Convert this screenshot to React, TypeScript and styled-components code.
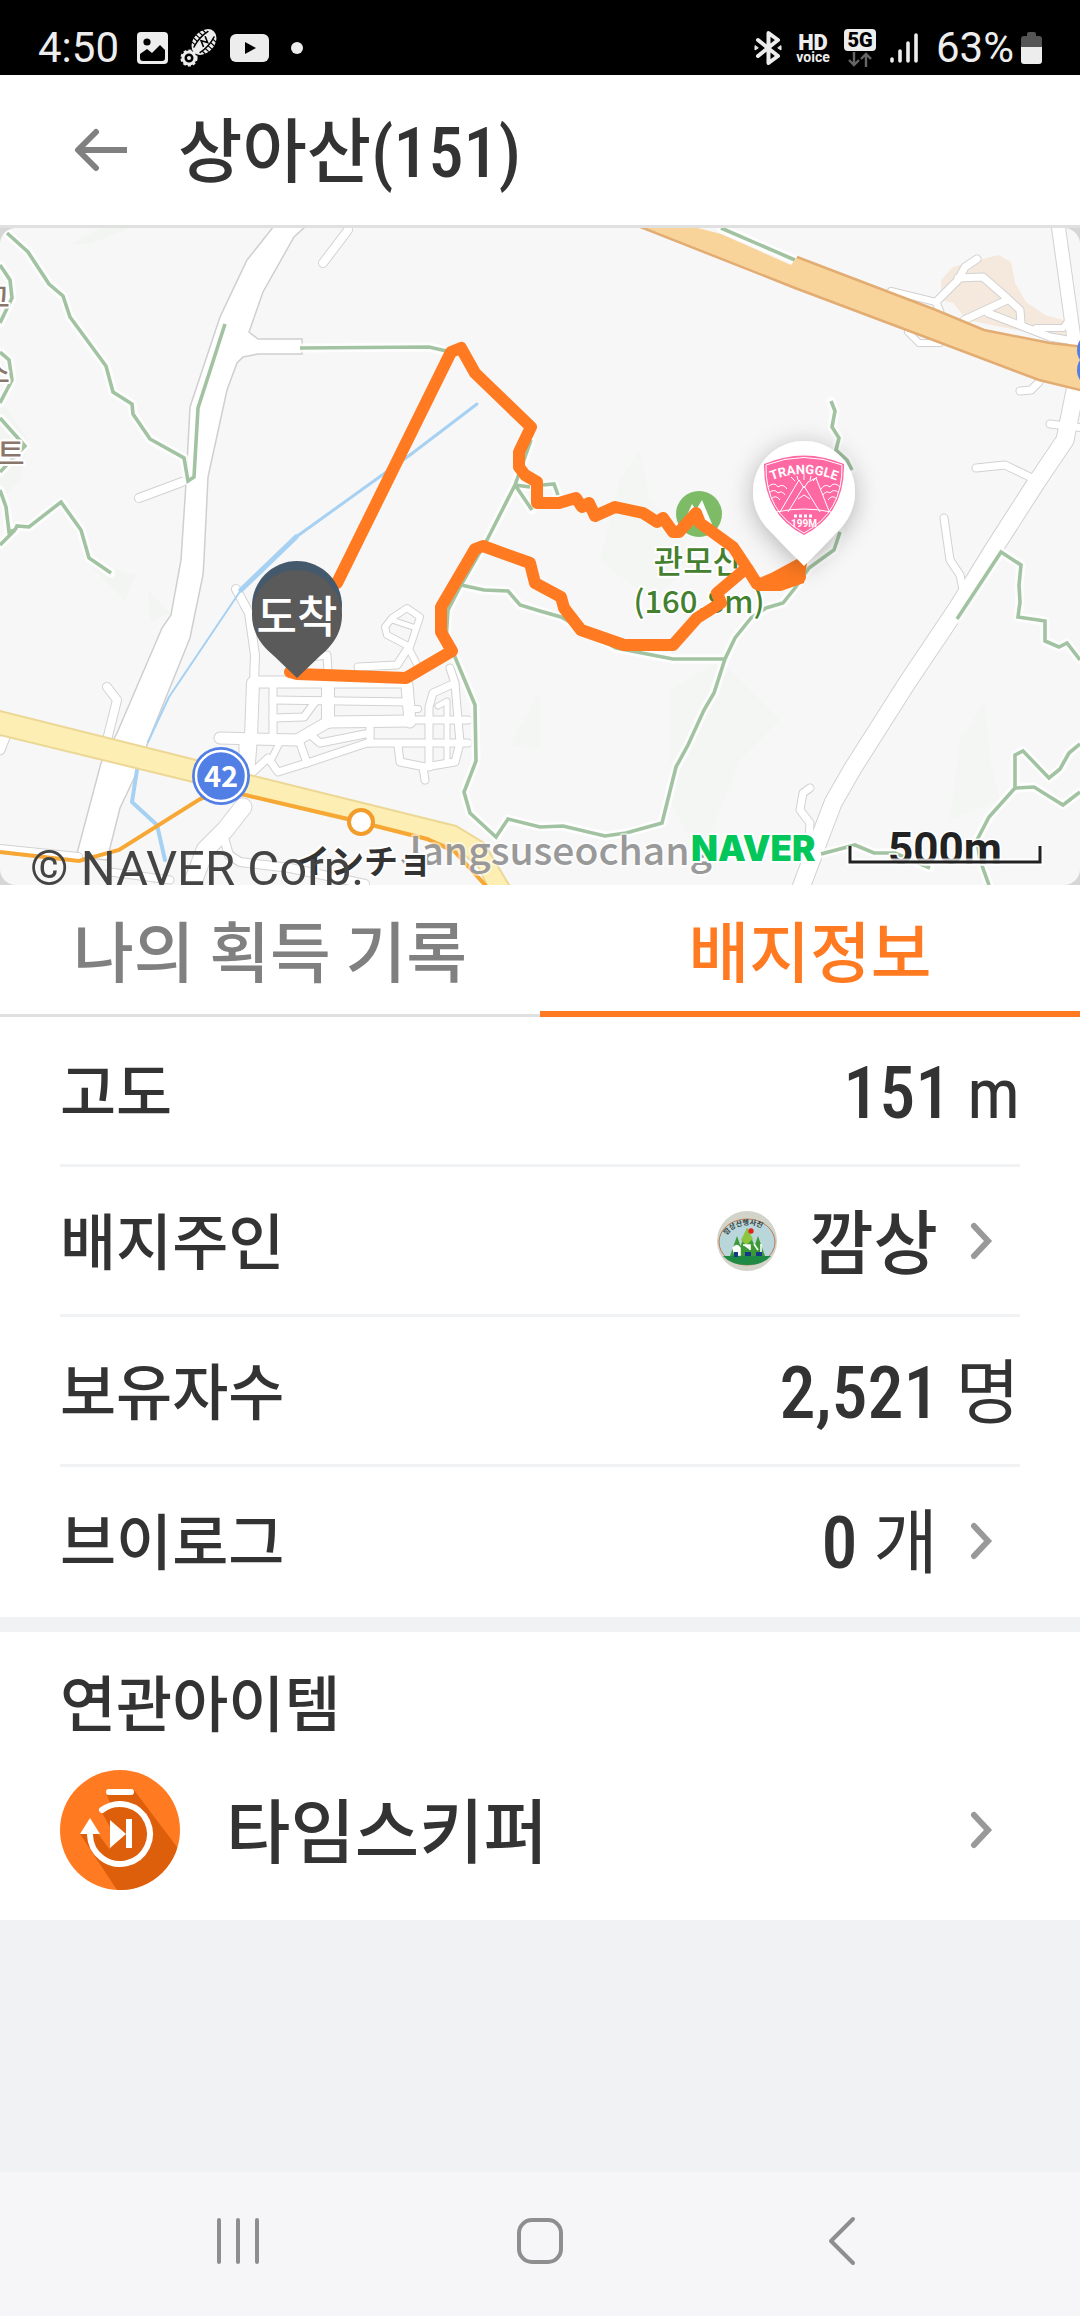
import React from "react";
import styled, { createGlobalStyle } from "styled-components";

const ink = "#333333";
const accent = "#ff7a21";
const sans = `"Noto Sans CJK KR", "Noto Sans", sans-serif`;
const narrow = `"Roboto Condensed", "Noto Sans CJK KR", sans-serif`;
const system = `Roboto, "Noto Sans CJK KR", sans-serif`;

const GlobalStyle = createGlobalStyle`
  *, *::before, *::after { box-sizing: border-box; }
  body { margin: 0; background: #f1f2f4; color: ${ink}; font-family: ${sans}; }
  button { border: 0; padding: 0; background: none; color: inherit; font: inherit; cursor: pointer; }
  svg { display: block; flex: none; }
  ul { list-style: none; margin: 0; padding: 0; }
`;

const Screen = styled.div`
  display: flex;
  flex-direction: column;
  min-height: 100vh;
`;

/* ---------- status bar ---------- */

const StatusBar = styled.div`
  display: flex;
  align-items: flex-end;
  justify-content: space-between;
  height: 75px;
  padding: 0 38px 6px;
  background: #000;
  color: #ededed;
  font-family: ${system};
  font-size: 42px;
  line-height: 42px;
`;

const StatusGroup = styled.div<{ $gap: number }>`
  display: flex;
  align-items: center;
  gap: ${(p) => p.$gap}px;
  height: 42px;
`;

const Clock = styled.span`
  margin-right: 6px;
`;

const Percent = styled.span`
  margin-left: 4px;
`;

const Dot = styled.span`
  width: 12px;
  height: 12px;
  margin-left: 10px;
  border-radius: 50%;
  background: #ededed;
`;

const HdVoice = styled.span`
  display: flex;
  flex-direction: column;
  align-items: center;
  width: 34px;
  font-weight: 700;
`;

const HdTop = styled.span`
  font-size: 22px;
  line-height: 17px;
  font-weight: 900;
`;

const HdBottom = styled.span`
  font-size: 14px;
  line-height: 12px;
`;

const FiveG = styled.span`
  display: flex;
  flex-direction: column;
  align-items: center;
  gap: 1px;
`;

const FiveGBox = styled.span`
  width: 32px;
  border-radius: 4px;
  background: #ededed;
  color: #000;
  font-size: 20px;
  line-height: 22px;
  font-weight: 900;
  text-align: center;
`;

/* ---------- header ---------- */

const Header = styled.header`
  display: flex;
  align-items: center;
  gap: 47px;
  height: 153px;
  padding: 0 72px;
  background: #fff;
  border-bottom: 3px solid #e0e0e0;
`;

const Title = styled.h1`
  margin: 0;
  padding-top: 6px;
  font-family: ${narrow};
  font-size: 70px;
  line-height: 100px;
  font-weight: 500;
`;

/* ---------- map ---------- */

const MapPanel = styled.section`
  background: #d6d6d6;
  overflow: hidden;
`;

const MapCanvas = styled.svg`
  width: 100%;
  height: auto;
  border-radius: 16px;
  background: #f7f7f7;
`;

/* ---------- tabs ---------- */

const Tabs = styled.div`
  display: grid;
  grid-template-columns: 1fr 1fr;
  height: 132px;
  background: #fff;
`;

const Tab = styled.button<{ $active?: boolean }>`
  height: 132px;
  padding-bottom: ${(p) => (p.$active ? 0 : 3)}px;
  border-bottom: ${(p) => (p.$active ? `6px solid ${accent}` : "3px solid #e0e0e0")};
  color: ${(p) => (p.$active ? accent : "#808080")};
  font-family: ${sans};
  font-size: 66px;
  line-height: 90px;
  font-weight: 500;
`;

/* ---------- rows ---------- */

const InfoList = styled.ul`
  padding: 0 60px;
  background: #fff;
`;

const InfoItem = styled.li`
  border-bottom: 3px solid #f1f2f4;

  &:last-child {
    border-bottom-color: #fff;
  }
`;

const Row = styled.div`
  display: flex;
  align-items: center;
  justify-content: space-between;
  width: 100%;
  height: 147px;
  text-align: left;
`;

const Label = styled.span`
  padding-bottom: 4px;
  font-size: 61px;
  line-height: 88px;
  font-weight: 500;
`;

const Value = styled.span`
  display: flex;
  align-items: center;
`;

const Amount = styled.span`
  padding-top: 6px;
  font-family: ${narrow};
  font-size: 72px;
  line-height: 100px;
  font-weight: 500;
`;

const Unit = styled.span`
  margin-left: 16px;
  padding-top: 6px;
  font-family: ${narrow};
  font-size: 70px;
  line-height: 100px;
  font-weight: 400;
`;

const Name = styled.span`
  margin-left: 32px;
  padding-bottom: 4px;
  font-size: 70px;
  line-height: 100px;
  font-weight: 500;
`;

const ChevronBox = styled.span`
  display: flex;
  justify-content: flex-end;
  width: 82px;
  padding-right: 27px;
`;

const Related = styled.section`
  height: 303px;
  padding: 25px 60px 32px;
  border-top: 15px solid #f1f2f4;
  background: #fff;
`;

const RelatedTitle = styled.h2`
  margin: 0;
  font-size: 61px;
  line-height: 88px;
  font-weight: 500;
`;

const ItemRow = styled.button`
  display: flex;
  align-items: center;
  width: 100%;
  height: 120px;
  margin-top: 25px;
  text-align: left;
`;

const ItemName = styled.span`
  flex: 1;
  margin-left: 46px;
  padding-bottom: 4px;
  font-size: 70px;
  line-height: 100px;
  font-weight: 500;
`;

const Filler = styled.div`
  flex: 1;
`;

const NavBar = styled.nav`
  display: flex;
  height: 144px;
  padding: 0 87px 6px;
  background: #f6f6f8;
`;

const NavButton = styled.button`
  display: flex;
  flex: 1;
  align-items: center;
  justify-content: center;
`;

/* ---------- icons ---------- */

const Chevron = () => (
  <ChevronBox>
    <svg width="24" height="38" viewBox="0 0 24 38" fill="none" stroke="#999" strokeWidth="6" strokeLinecap="round">
      <path d="M5 4 19 19 5 34" />
    </svg>
  </ChevronBox>
);

const BackArrow = () => (
  <svg width="59" height="44" viewBox="0 0 59 44" fill="none" stroke="#808080" strokeWidth="6">
    <path d="M55 22H5" />
    <path d="M24 4 6 22l18 18" strokeLinecap="round" strokeLinejoin="round" />
  </svg>
);

const PhotoIcon = () => (
  <svg width="31" height="32" viewBox="0 0 31 32">
    <rect width="31" height="32" rx="4" fill="#ededed" />
    <circle cx="10" cy="10" r="3.6" />
    <path d="M3 22 10 17l5 4 8-8 5 5v8q0 3-3 3H6q-3 0-3-3Z" />
  </svg>
);

const FootIcon = () => (
  <svg width="38" height="38" viewBox="0 0 38 38">
    <g transform="rotate(42 24 13)">
      <ellipse cx="24" cy="13" rx="10.5" ry="14.5" fill="#ededed" />
      <g stroke="#000" strokeWidth="1.2" fill="none">
        <path d="M14 5h5M14 9h5M13 13h6M14 17h5M15 21h4M29 5h5M29 9h5M29 13h6M29 17h5M29 21h4" />
        <path d="M20 2q-3 11 0 22M28 2q3 11 0 22M21 8l6 3-6 3 6 3" strokeWidth="1.6" />
      </g>
    </g>
    <circle cx="9" cy="29" r="6" fill="none" stroke="#ededed" strokeWidth="3" />
    <circle cx="9" cy="29" r="7.6" fill="none" stroke="#ededed" strokeWidth="2" strokeDasharray="3 2" />
    <circle cx="9" cy="29" r="2" fill="#ededed" />
  </svg>
);

const VideoIcon = () => (
  <svg width="39" height="28" viewBox="0 0 39 28">
    <rect width="39" height="28" rx="6" fill="#ededed" />
    <path d="M15 8v12l11-6Z" />
  </svg>
);

const BluetoothIcon = () => (
  <svg width="28" height="34" viewBox="0 0 28 34" fill="none" stroke="#ededed" strokeWidth="4" strokeLinejoin="round" strokeLinecap="round">
    <path d="M4 9 24 25 14.500 32V2L24 9 4 25" />
    <path d="M1 15v4l3-2ZM27 15v4l-3-2Z" fill="#ededed" strokeWidth="1" />
  </svg>
);

const DataArrows = () => (
  <svg width="26" height="15" viewBox="0 0 26 15" fill="none" stroke="#666" strokeWidth="2.4">
    <path d="M7 0v13M2 8l5 5 5-5M19 15V2M14 7l5-5 5 5" />
  </svg>
);

const SignalIcon = () => (
  <svg width="28" height="30" viewBox="0 0 28 30" fill="none" stroke="#ededed" strokeWidth="3.600" strokeLinecap="round">
    <path d="M2 26v2M10 18v10M18 10v18M26 2v26" />
  </svg>
);

const BatteryIcon = () => (
  <svg width="21" height="32" viewBox="0 0 21 32">
    <path d="M6 2q0-2 2-2h5q2 0 2 2v2h3q3 0 3 3v9H0V7q0-3 3-3h3Z" fill="#555" />
    <path d="M0 15h21v14q0 3-3 3H3q-3 0-3-3Z" fill="#ededed" />
  </svg>
);

const OwnerAvatar = () => (
  <svg width="60" height="60" viewBox="0 0 60 60">
    <defs>
      <clipPath id="avatarClip">
        <circle cx="30" cy="30" r="30" />
      </clipPath>
      <path id="avatarArc" d="M8 29Q12 15 30 14t23 16" />
    </defs>
    <g clipPath="url(#avatarClip)">
      <rect width="60" height="60" fill="#d2d3c9" />
      <ellipse cx="30" cy="31" rx="28" ry="23" fill="#b9d6da" stroke="#b97a52" />
      <path d="M6 45h48Q46 54 30 54T6 45Z" fill="#1f8a43" />
      <path d="m20 25-7 20h14ZM30 17 20 45h22ZM41 25l-7 20h14Z" fill="#3b9a35" />
      <path d="m30 17-6 12 5 5 7-6Z" fill="#8cc63f" />
      <circle cx="34" cy="20" r="2.700" fill="#e2231a" />
      <path d="M16 37q4-5 7 0v7h-5ZM26 34h7v5M37 33l4 6M44 33v8" fill="#fff" stroke="#fff" strokeWidth="1.600" />
      <path d="M19 41v5M28 43h6M39 43h6" stroke="#14398c" strokeWidth="4" />
      <text fontFamily={sans} fontSize="7" fontWeight="700" fill="#35403c">
        <textPath href="#avatarArc" startOffset="5">깜상산행사진</textPath>
      </text>
    </g>
  </svg>
);

const TimeSkipperIcon = () => (
  <svg width="120" height="120" viewBox="0 0 120 120">
    <defs>
      <clipPath id="skipClip">
        <circle cx="60" cy="60" r="60" />
      </clipPath>
    </defs>
    <g clipPath="url(#skipClip)">
      <rect width="120" height="120" fill={accent} />
      <path d="M74 20 120 81V120H57L20 64l11-10 19 26V57L41 41l9-8-3-8Z" fill="#dd5f0c" />
    </g>
    <g fill="none" stroke="#fff" strokeWidth="6" strokeLinecap="round">
      <path d="M49 22h22" />
      <path d="M42 40A30 30 0 1 1 30 65" />
    </g>
    <path d="M20 64h20L30 48ZM50 50 66 64V49h6v29h-6V64L50 78Z" fill="#fff" />
  </svg>
);

/* ---------- map data ---------- */

type Road = [d: string, width: number];

const roads: Road[] = [
  ["M139 498 182 482", 8],
  ["M348 230 323 263", 8],
  ["M107 687 117 700 107 740", 8],
  ["M0 849 78 857", 8],
  ["M0 750 5 737", 9],
  ["M243 807 225 830 205 850 190 890", 17],
  ["M224 838 229 855 240 862 290 868 365 884", 8],
  ["M110 872 170 880", 7],
  ["M236 589 249 613 255 655 254 683", 8],
  ["M254 682 403 682", 11],
  ["M253 683 251 737 248 775", 12],
  ["M220 738 297 740 328 722 410 721", 11],
  ["M410 720 468 720", 7],
  ["M273 687V740", 7],
  ["M273 700 410 702", 7],
  ["M328 685V722", 12],
  ["M407 685 410 722", 11],
  ["M273 718 304 717 315 702", 7],
  ["M410 709H418", 6],
  ["M313 737 320 743 370 733", 7],
  ["M370 722V743", 7],
  ["M368 743H468", 7],
  ["M300 743 307 763 278 772 268 758 253 772", 7],
  ["M307 763 367 743", 7],
  ["M272 758 280 742", 6],
  ["M243 740V757", 7],
  ["M398 745 400 762 425 767 455 762 460 743 455 684", 7],
  ["M423 767 425 780", 7],
  ["M429 767V707L433 693 455 683 450 668", 7],
  ["M447 763V701L438 706", 5],
  ["M407 608 420 617 410 647 387 635 385 627 392 618Z", 6],
  ["M392 620 413 627", 5],
  ["M408 647 420 670", 6],
  ["M358 667 397 665 408 648", 7],
  ["M310 657 327 655 328 672", 7],
  ["M977 259 965 267 958 280 936 302 940 312", 7],
  ["M891 291 936 302", 6],
  ["M958 278 983 277 1007 298 1020 310 1021 323", 7],
  ["M1007 300 964 320", 7],
  ["M988 313 1050 337 1080 342", 7],
  ["M1036 328H1063L1069 320", 6],
  ["M1058 224 1075 346", 13],
  ["M908 332 919 343H940", 6],
  ["M1020 391 1031 390 1039 382", 7],
  ["M1076 386 1065 440 1036 483 993 550 958 607 907 683 853 768 833 803 800 890", 17],
  ["M1050 424 1084 428", 7],
  ["M976 468 1005 465 1036 480", 7],
  ["M944 518 950 560 960 575 964 594", 7],
  ["M810 788 803 793 800 810 810 823 809 838", 7],
];

const trails = [
  "M7 233 28 252 49 284 63 296 70 317 106 366 113 392 132 404 133 414 150 439 184 458 188 481 194 477 198 408 225 324",
  "M0 265 10 280 12 298 0 323",
  "M0 352 9 360 12 380 0 403",
  "M0 418 25 446 0 472",
  "M0 490 6 507 9 532 15 530 0 545",
  "M15 530 17 526 29 527 61 502 81 530 89 558 111 573",
  "M300 348 429 347 455 353",
  "M531 440 515 485 487 540 461 585 484 590 508 591 520 605 540 611 561 617 616 648 673 659H725",
  "M515 485 530 487M515 485 532 510M542 485 554 484 558 495",
  "M461 585 448 610 446 640 455 657 475 705 476 761 464 792 470 813 496 837 508 819 540 827 563 826 605 836 626 833 662 823 676 767 688 745 704 710 714 693 725 659 735 638 751 618 766 608 783 603 795 588 809 568 834 550 840 532",
  "M831 401 835 411 832 427 839 438 836 450 847 460 852 470",
  "M721 228 795 260",
  "M957 619 1001 552 1021 565 1019 585 1020 602 1018 617 1045 621V641L1059 647 1067 643 1080 660",
  "M1080 744 1069 753 1060 769 1049 778 1023 751 1015 755V788L989 817 977 840 980 860 989 885",
  "M1015 788 1034 787 1063 805 1080 792",
  "M821 854 855 845 874 853 895 853 930 868",
];

const hikeRoute =
  "M290 672 297 674 406 678 452 651 441 632V607L475 549 483 546 530 563 535 583 561 597 564 608 581 630 624 645H673L697 618 721 603 717 593 743 571";
const hikeReturn =
  "M337 583 451 352 461 348 475 373 531 427 519 452V467L525 475 537 482V503H559L576 498 582 507 589 503 595 516 615 507 643 513 657 522 663 518 673 532H679L696 513 700 523 733 547 747 568 757 584H781L800 577";

const TrailMap = () => (
  <MapCanvas viewBox="0 228 1080 657" role="img" aria-label="상아산 지도">
    <defs>
      <path id="badgeArc" d="M768 482Q804 466 840 482" />
      <filter id="pinShadow" x="-40%" y="-40%" width="180%" height="180%">
        <feDropShadow dx="0" dy="4" stdDeviation="12" floodColor="#000" floodOpacity="0.28" />
      </filter>
    </defs>

    <g fill="#f2f5f2">
      <path d="M70 245 100 228H130L90 244ZM0 400 28 440 20 480 0 500ZM85 560 136 575 125 600ZM148 590 170 613 150 622Z" />
      <path d="M620 480 640 450 650 500 700 560 650 600 600 560ZM670 690 720 660 780 720 740 760 700 860 670 800ZM985 700 990 760 1000 800 950 820 960 740ZM510 745 540 690V750Z" opacity="0.700" />
    </g>

    <path
      d="M941 280 953 267 998 255 1011 262 1015 283 1026 302 1045 315 1063 320 1067 340 967 320 953 303 941 300Z"
      fill="#f5e8dc"
    />

    <path
      d="M274 226 247 260 220 317 190 407 186 483 181 560 171 615 162 628 117 733 101 763 76 857 107 860 120 808 138 770 148 742 190 638 192 628 203 575 204 560 208 477 227 390 237 363 243 357 258 354H302V339H258L249 332 263 292 294 237 306 226Z"
      fill="#fff"
      stroke="#cfcfcf"
      strokeWidth="1.500"
    />

    <g fill="none" strokeLinecap="round" strokeLinejoin="round">
      <g stroke="#d2d2d2">
        {roads.map(([d, w]) => (
          <path key={d} d={d} strokeWidth={w + 2} />
        ))}
      </g>
      <g stroke="#fff">
        {roads.map(([d, w]) => (
          <path key={d} d={d} strokeWidth={w} />
        ))}
      </g>
      <g stroke="#a6d1f2">
        <path d="M477 404 410 455" strokeWidth="3" />
        <path d="M410 455 296 537" strokeWidth="3" />
        <path d="M296 537 241 590" strokeWidth="5" />
        <path d="M241 590 169 697 148 742" strokeWidth="2" />
        <path d="M137 770 132 802 157 825 165 860" strokeWidth="4" />
      </g>
      <g stroke="#fff" strokeWidth="9" opacity="0.800">
        {trails.map((d) => (
          <path key={d} d={d} />
        ))}
      </g>
      <g stroke="#a2c3a1" strokeWidth="3.600" strokeLinejoin="miter" strokeLinecap="butt">
        {trails.map((d) => (
          <path key={d} d={d} />
        ))}
      </g>
    </g>

    <path
      d="M638 226 795 288 912 332 1039 380 1084 391V347L1050 343 984 330 936 310 797 257 791 265 721 234 690 226Z"
      fill="#f9d49a"
    />
    <path d="M638 226 795 288 912 332 1039 380 1084 391M1084 347 1050 343 984 330 936 310 797 257" fill="none" stroke="#e2ac72" strokeWidth="2.500" />
    <circle cx="1095" cy="350" r="18" fill="#527fe6" />
    <circle cx="1095" cy="370" r="18" fill="#527fe6" />

    <path d="M-4 710 196 760 250 775 456 826 484 843 512 890H489L478 866 455 848 430 840 250 797 193 782-4 734Z" fill="#fdeeb3" stroke="#ecd795" strokeWidth="2" />
    <path d="M0 852 79 861 119 850 200 799 220 792 241 794 348 819 427 839 455 852 487 887" fill="none" stroke="#f7a834" strokeWidth="4" />
    <circle cx="361" cy="822" r="12" fill="#fff" stroke="#f29c2c" strokeWidth="4" />

    <circle cx="221" cy="776" r="29" fill="#527fe6" />
    <circle cx="221" cy="776" r="25" fill="none" stroke="#fff" strokeWidth="2.500" />
    <text x="221" y="787" textAnchor="middle" fontFamily={sans} fontSize="29" fontWeight="700" fill="#fff">
      42
    </text>

    <g fontFamily={sans} paintOrder="stroke" stroke="#fff" strokeWidth="4" strokeLinejoin="round">
      <text x="-16" y="308" fontSize="28" fontWeight="500" fill="#8a776c">그</text>
      <text x="-16" y="383" fontSize="28" fontWeight="500" fill="#8a776c">스</text>
      <text x="-3" y="464" fontSize="30" fontWeight="500" fill="#8a776c">트</text>
      <text x="400" y="865" fontSize="39" fontWeight="500" fill="#999" strokeOpacity="0.500">Jangsuseochang</text>
      <text x="296" y="874" fontSize="34" fontWeight="700" fill="#333" fontFamily={`"Noto Sans CJK JP", sans-serif`}>
        インチョ
      </text>
    </g>

    <circle cx="699" cy="514" r="23" fill="#7dbb66" />
    <path d="M683 524 692 504l4 6 6-10 10 24Z" fill="#fff" />
    <g fontFamily={sans} fontWeight="500" fill="#44812f" textAnchor="middle" paintOrder="stroke" stroke="#fff" strokeWidth="4" strokeLinejoin="round">
      <text x="698" y="573" fontSize="32">관모산</text>
      <text x="699" y="613" fontSize="31">(160.8m)</text>
    </g>

    <g fill="none" stroke={accent} strokeWidth="12" strokeLinejoin="round" strokeLinecap="round">
      <path d={hikeRoute} />
      <path d={hikeReturn} />
    </g>
    <path d="M757 579 771 573 797 559 807 563 804 583 781 591H757Z" fill={accent} />

    <circle cx="297" cy="606" r="45" fill="#45596d" />
    <path d="M252 615A45 45 0 0 1 342 615C342 634 331 647 320 656L297 678 274 656C263 647 252 634 252 615Z" fill="#5a5a5a" />
    <text x="297" y="633" textAnchor="middle" fontFamily={sans} fontSize="44" fontWeight="500" fill="#fff">
      도착
    </text>

    <path d="M753 492A51 51 0 0 1 855 492C855 509 847 522 838 531L804 566 770 531C761 522 753 509 753 492Z" fill="#fff" filter="url(#pinShadow)" />
    <path d="M764 464Q804 447 844 464 845 514 804 535 763 514 764 464Z" fill="#ff69a3" />
    <g fill="none" stroke="#fff" strokeWidth="1">
      <path d="M766 465Q804 450 842 465 843 512 804 533 765 512 766 465Z" />
      <path d="m780 512 19-32 5 8 4-6 8-4 13 33M788 512l16-26 16 26M776 512q28-6 55 0M798 499l6-4 6 4M797 476l1 4M804 474v6M811 476l-1 4M791 477l4 4M817 477l-4 4" />
      <path d="M768 487q6-6 10 0 5-4 9 2M769 493q5-5 9 0 4-3 7 2M771 499q5-5 9 1M840 487q-6-6-10 0-5-4-9 2M839 493q-5-5-9 0-4-3-7 2M837 499q-5-5-9 1" />
      <path d="M794 516h20" strokeWidth="3" strokeDasharray="3 2" />
    </g>
    <text fontFamily={`Roboto, sans-serif`} fontSize="13" fontWeight="700" fill="#fff" textAnchor="middle">
      <textPath href="#badgeArc" startOffset="50%">TRANGGLE</textPath>
    </text>
    <text x="804" y="527" fontFamily={`Roboto, sans-serif`} fontSize="10" fontWeight="700" fill="#fff" textAnchor="middle">
      199M
    </text>

    <text x="30" y="885" fontFamily={system} fontSize="49" fill="#444">
      © NAVER Corp.
    </text>
    <text x="691" y="861" fontFamily={`Inter, sans-serif`} fontSize="35" fontWeight="900" fill="#03c75a" paintOrder="stroke" stroke="#fff" strokeWidth="4">
      NAVER
    </text>
    <text x="945" y="864" textAnchor="middle" fontFamily={system} fontSize="44" fontWeight="700" fill="#222" paintOrder="stroke" stroke="#fff" strokeWidth="3">
      500m
    </text>
    <path d="M850 846V862H1040V846" fill="none" stroke="#fff" strokeWidth="7" opacity="0.800" />
    <path d="M850 846V862H1040V846" fill="none" stroke="#222" strokeWidth="3" />
  </MapCanvas>
);

export default function App() {
  return (
    <Screen>
      <GlobalStyle />
      <StatusBar>
        <StatusGroup $gap={12}>
          <Clock>4:50</Clock>
          <PhotoIcon />
          <FootIcon />
          <VideoIcon />
          <Dot />
        </StatusGroup>
        <StatusGroup $gap={14}>
          <BluetoothIcon />
          <HdVoice>
            <HdTop>HD</HdTop>
            <HdBottom>voice</HdBottom>
          </HdVoice>
          <FiveG>
            <FiveGBox>5G</FiveGBox>
            <DataArrows />
          </FiveG>
          <SignalIcon />
          <StatusGroup $gap={7}>
            <Percent>63%</Percent>
            <BatteryIcon />
          </StatusGroup>
        </StatusGroup>
      </StatusBar>

      <Header>
        <button type="button" aria-label="뒤로">
          <BackArrow />
        </button>
        <Title>상아산(151)</Title>
      </Header>

      <MapPanel>
        <TrailMap />
      </MapPanel>

      <Tabs role="tablist">
        <Tab type="button" role="tab" aria-selected={false}>
          나의 획득 기록
        </Tab>
        <Tab type="button" role="tab" aria-selected $active>
          배지정보
        </Tab>
      </Tabs>

      <InfoList>
        <InfoItem>
          <Row>
            <Label>고도</Label>
            <Value>
              <Amount>151</Amount>
              <Unit>m</Unit>
            </Value>
          </Row>
        </InfoItem>
        <InfoItem>
          <Row as="button" type="button">
            <Label>배지주인</Label>
            <Value>
              <OwnerAvatar />
              <Name>깜상</Name>
              <Chevron />
            </Value>
          </Row>
        </InfoItem>
        <InfoItem>
          <Row>
            <Label>보유자수</Label>
            <Value>
              <Amount>2,521</Amount>
              <Unit>명</Unit>
            </Value>
          </Row>
        </InfoItem>
        <InfoItem>
          <Row as="button" type="button">
            <Label>브이로그</Label>
            <Value>
              <Amount>0</Amount>
              <Unit>개</Unit>
              <Chevron />
            </Value>
          </Row>
        </InfoItem>
      </InfoList>

      <Related>
        <RelatedTitle>연관아이템</RelatedTitle>
        <ItemRow type="button">
          <TimeSkipperIcon />
          <ItemName>타임스키퍼</ItemName>
          <Chevron />
        </ItemRow>
      </Related>

      <Filler />

      <NavBar>
        <NavButton type="button" aria-label="최근 앱">
          <svg width="44" height="48" viewBox="0 0 44 48" stroke="#8e8e8e" strokeWidth="4" strokeLinecap="round">
            <path d="M3 3v42M22 3v42M41 3v42" />
          </svg>
        </NavButton>
        <NavButton type="button" aria-label="홈">
          <svg width="48" height="48" viewBox="0 0 48 48" fill="none" stroke="#8e8e8e" strokeWidth="4">
            <rect x="3" y="3" width="42" height="42" rx="13" />
          </svg>
        </NavButton>
        <NavButton type="button" aria-label="이전">
          <svg width="28" height="50" viewBox="0 0 28 50" fill="none" stroke="#8e8e8e" strokeWidth="4" strokeLinecap="round" strokeLinejoin="round">
            <path d="M25 3 3 25l22 22" />
          </svg>
        </NavButton>
      </NavBar>
    </Screen>
  );
}
